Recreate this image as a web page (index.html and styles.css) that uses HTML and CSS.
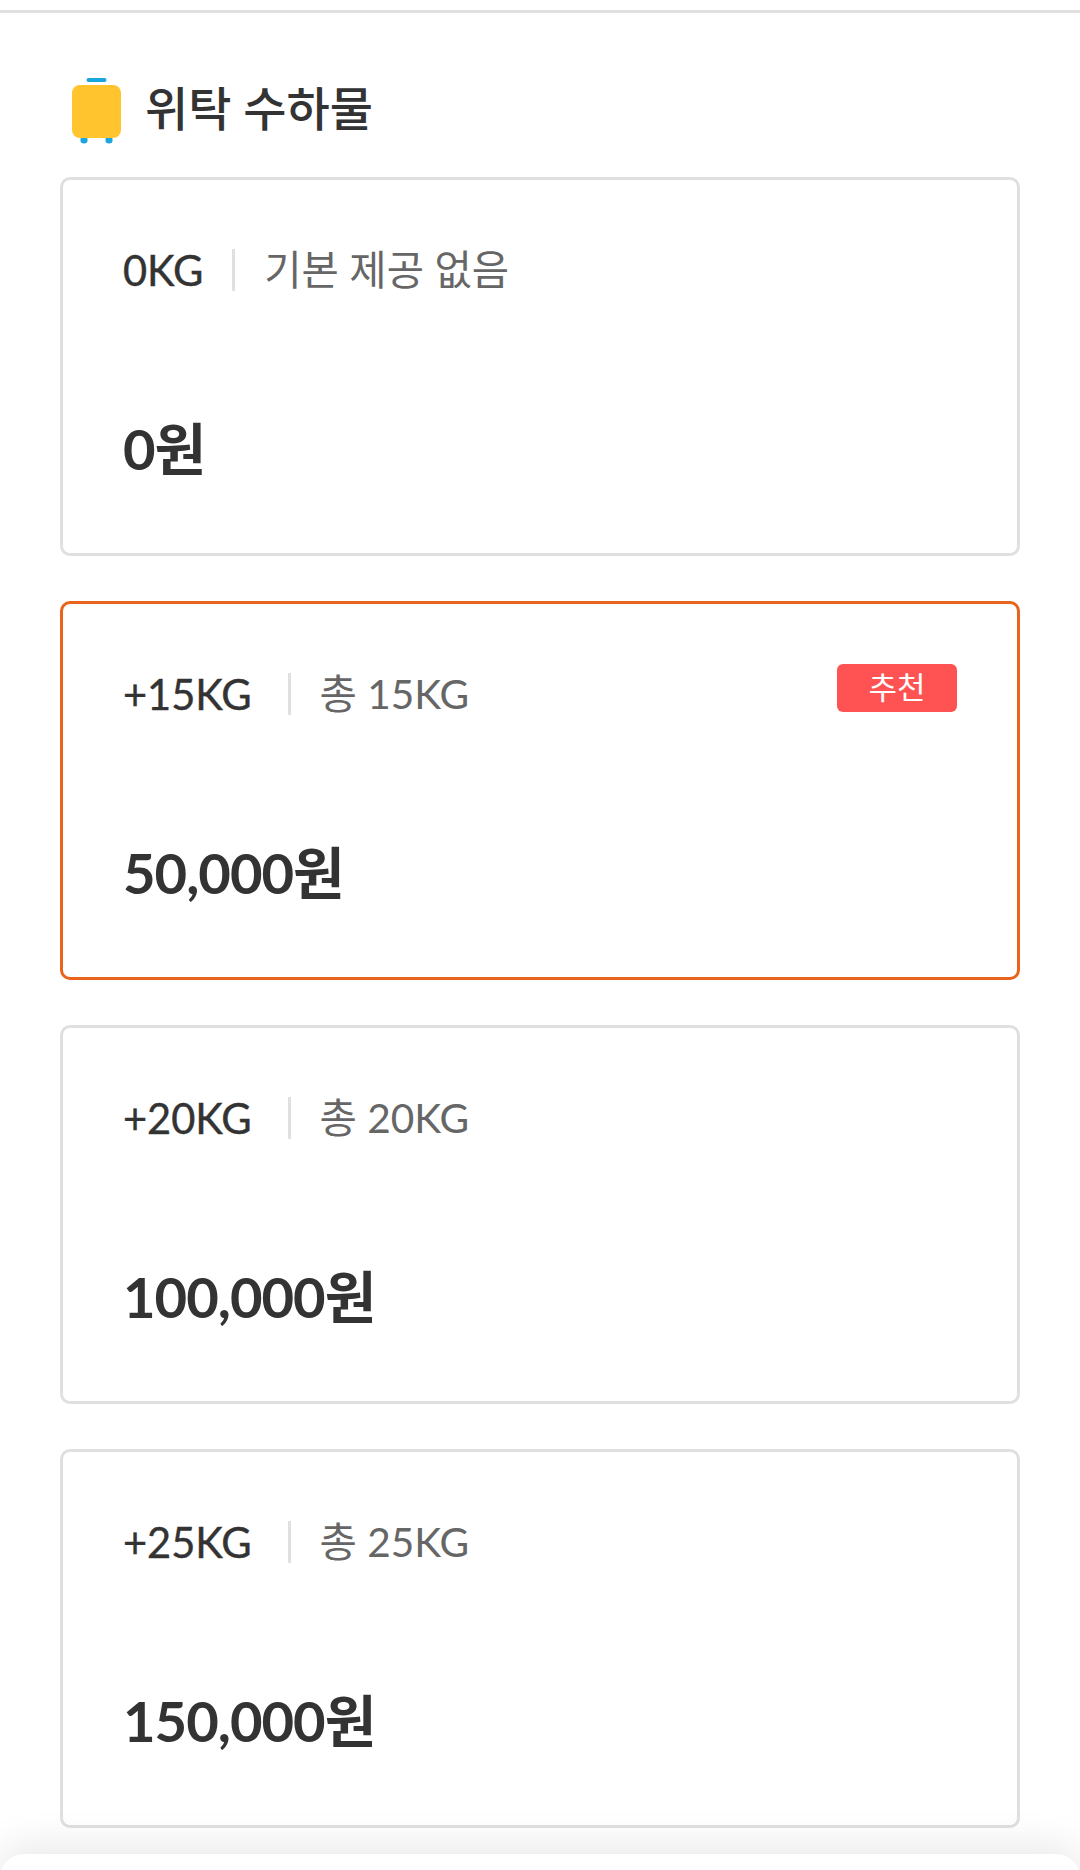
FILE: index.html
```html
<!DOCTYPE html>
<html lang="ko">
<head>
<meta charset="utf-8">
<title>위탁 수하물</title>
<link rel="stylesheet" href="styles.css">
</head>
<body>
<div class="page">
  <hr class="top-line">
  <h2 class="title-row">
    <svg class="bag" viewBox="0 0 50 66" width="50" height="66" aria-hidden="true">
      <rect x="14.5" y="0" width="20" height="4" rx="2" fill="#1ba6e0"/>
      <circle cx="12" cy="62" r="3.6" fill="#1ba6e0"/>
      <circle cx="37" cy="62" r="3.6" fill="#1ba6e0"/>
      <rect x="0" y="7" width="49" height="53" rx="8" fill="#ffc42e"/>
    </svg>
    <span>위탁 수하물</span>
  </h2>
  <div class="cards">
    <section class="card">
      <div class="info"><span class="kg">0KG</span><i class="sep"></i><span class="total">기본 제공 없음</span></div>
      <div class="price">0원</div>
    </section>
    <section class="card selected">
      <div class="info"><span class="kg plus">+15KG</span><i class="sep"></i><span class="total">총 15KG</span><span class="badge">추천</span></div>
      <div class="price">50,000원</div>
    </section>
    <section class="card">
      <div class="info"><span class="kg plus">+20KG</span><i class="sep"></i><span class="total">총 20KG</span></div>
      <div class="price">100,000원</div>
    </section>
    <section class="card">
      <div class="info"><span class="kg plus">+25KG</span><i class="sep"></i><span class="total">총 25KG</span></div>
      <div class="price">150,000원</div>
    </section>
  </div>
  <div class="sheet"></div>
</div>
</body>
</html>
```
FILE: styles.css
```css
* { box-sizing: border-box; }
html, body { margin: 0; padding: 0; background: #fff; }
body { font-family: Lato, "Noto Sans CJK KR", sans-serif; color: #333; }
.page { position: relative; width: 1080px; height: 1870px; overflow: hidden; padding-top: 10px; }
.top-line { margin: 0; border: 0; height: 3px; background: #e0e0e0; }
.title-row { display: flex; align-items: flex-start; margin: 65px 0 0 72px; height: 99px; font-size: 47px; font-weight: 500; line-height: 60px; }
.bag { flex: none; display: block; }
.title-row span { margin-left: 23px; }
.cards { display: flex; flex-direction: column; gap: 45.4px; padding: 0 60px; }
.card { height: 378.6px; border: 3px solid #e0e0e0; border-radius: 10px; padding: 66px 60px 0; background: #fff; }
.card.selected { border-color: #e8641c; }
.info { display: flex; align-items: center; height: 48px; font-size: 40.6px; line-height: 48px; }
.kg { font-size: 41.6px; color: #333; -webkit-text-stroke: 0.4px #333; }
.kg.plus { margin-right: 7px; }
.sep { width: 3px; height: 42px; margin: 0 29px; background: #e0e0e0; }
.total { color: #666; }
.badge { margin-left: auto; margin-top: -12px; width: 120px; height: 48px; border-radius: 6px; background: #ff5252; color: #fff; font-size: 31px; line-height: 46px; text-align: center; }
.price { margin-top: 122px; font-size: 56.2px; line-height: 66px; font-weight: 700; letter-spacing: -1px; }
.sheet { position: absolute; left: 0; right: 0; top: 1854px; height: 100px; background: #fff; border-radius: 24px 24px 0 0; box-shadow: 0 -6px 40px rgba(0,0,0,.1); }
```
